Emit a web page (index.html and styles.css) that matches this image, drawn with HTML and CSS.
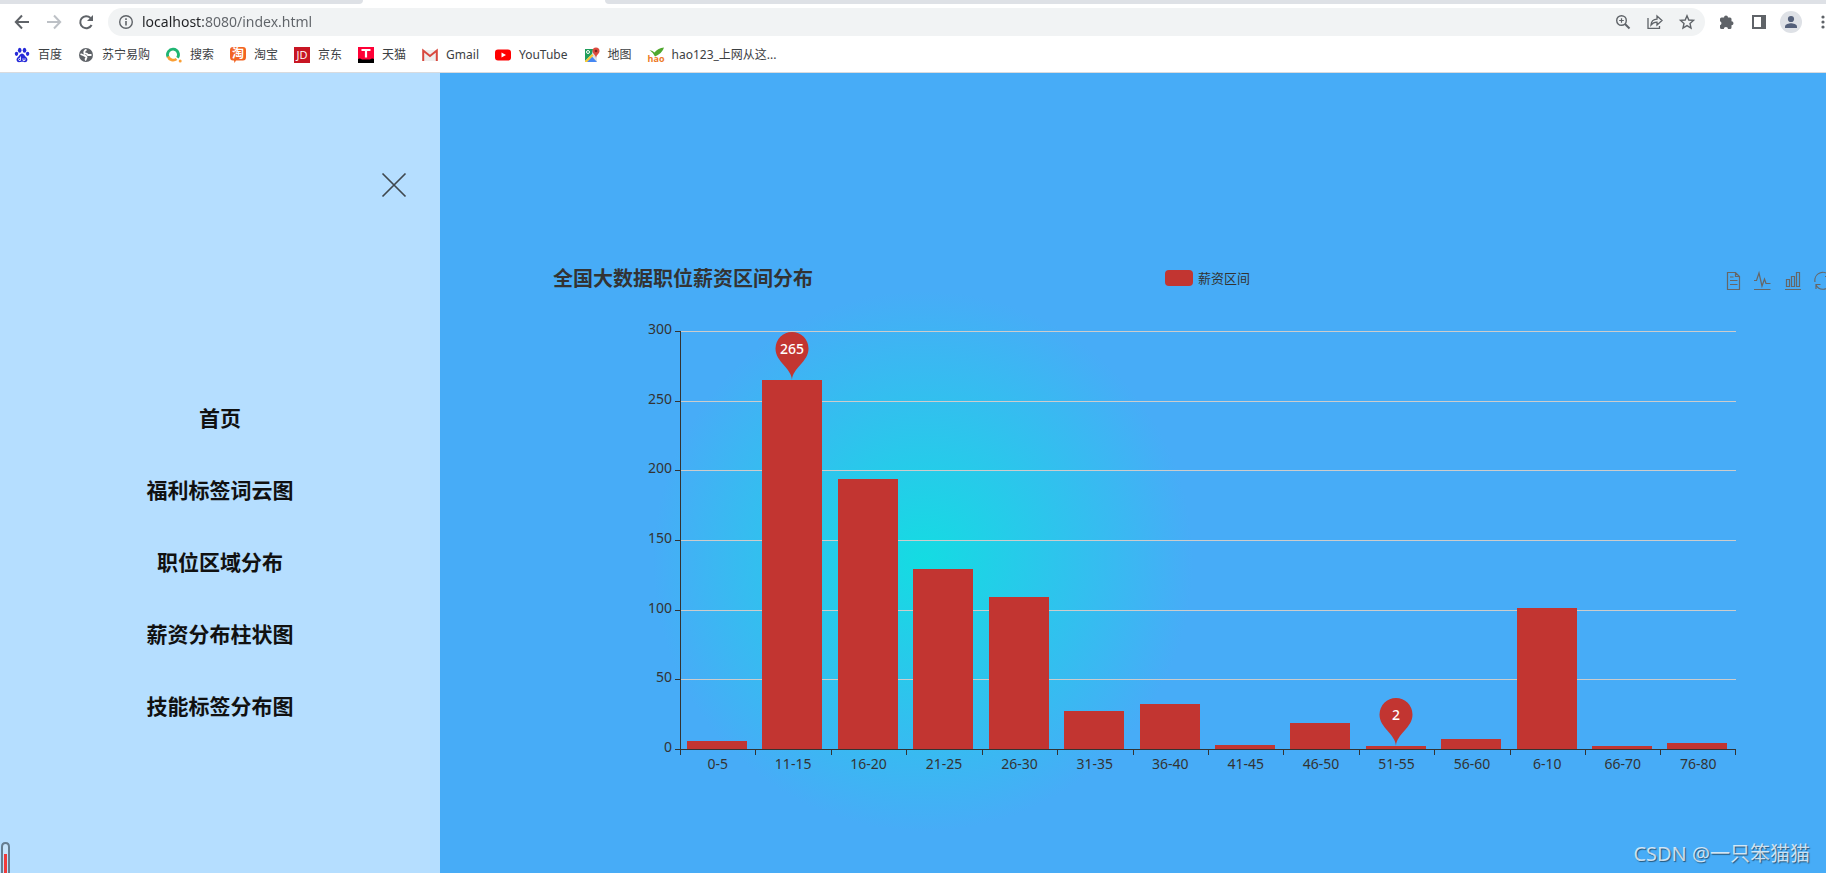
FILE: index.html
```html
<!DOCTYPE html>
<html lang="zh-CN">
<head>
<meta charset="utf-8">
<title>全国大数据职位薪资区间分布</title>
<link rel="stylesheet" href="styles.css">
</head>
<body>
<header class="browser">
  <div class="tabs"><span class="tab tab-before"></span><span class="tab-active"></span><span class="tab tab-after"></span></div>
  <div class="toolbar">
    <button class="nav-btn" aria-label="后退"><svg width="16" height="16" viewBox="0 0 16 16"><path d="M15 8H2M8 1.500L1.800 8L8 14.500" fill="none" stroke="#5f6368" stroke-width="2"/></svg></button>
    <button class="nav-btn" aria-label="前进"><svg width="16" height="16" viewBox="0 0 16 16"><path d="M1 8H14M8 1.500L14.200 8L8 14.500" fill="none" stroke="#bdc1c6" stroke-width="2"/></svg></button>
    <button class="nav-btn" aria-label="刷新"><svg width="16" height="16" viewBox="0 0 16 16"><path d="M13.600 11A6 6 0 1 1 12.500 4" fill="none" stroke="#5f6368" stroke-width="2"/><path d="M15 1V7H9Z" fill="#5f6368"/></svg></button>
    <div class="omnibox">
      <svg width="16" height="16" viewBox="0 0 16 16"><circle cx="8" cy="8" r="6.300" fill="none" stroke="#5f6368" stroke-width="1.400"/><path d="M8 7V11.500M8 4.300V5.900" stroke="#5f6368" stroke-width="1.600"/></svg>
      <input class="url" type="text" aria-label="地址" value="localhost:8080/index.html">
      <button class="nav-btn" aria-label="缩放"><svg width="16" height="16" viewBox="0 0 16 16" fill="none" stroke="#5f6368" stroke-width="1.400"><circle cx="6.500" cy="6.500" r="4.800"/><path d="M10 10L14.500 14.500" stroke-width="2"/><path d="M4.200 6.500H8.800M6.500 4.200V8.800" stroke-width="1.200"/></svg></button>
      <button class="nav-btn" aria-label="分享"><svg width="16" height="16" viewBox="0 0 16 16" fill="none" stroke="#5f6368" stroke-width="1.300"><path d="M1 4V14.300H12.500V12"/><path d="M4 11C4.300 7 6.500 5.300 10 5.200V2L15 6.600L10 11V8.100C7.500 8 5.700 8.800 4 11Z"/></svg></button>
      <button class="nav-btn" aria-label="收藏"><svg width="16" height="16" viewBox="0 0 16 16"><path d="M8 1.800L9.800 6L14.500 6.400L11 9.500L12 14L8 11.600L4 14L5 9.500L1.500 6.400L6.200 6Z" fill="none" stroke="#5f6368" stroke-width="1.400"/></svg></button>
    </div>
    <div class="actions">
      <button class="nav-btn" aria-label="扩展程序"><svg width="16" height="16" viewBox="0 0 16 16"><path d="M1 5Q1 3.500 2.500 3.500H5A2 2 0 0 1 9 3.500H11Q12.500 3.500 12.500 5V7.200A2 2 0 0 1 12.500 11.200V13.500Q12.500 15 11 15H9A2.100 2.100 0 0 0 4.800 15H2.500Q1 15 1 13.500V11.200A2.100 2.100 0 0 0 1 7.200Z" fill="#5f6368"/></svg></button>
      <button class="nav-btn" aria-label="侧边栏"><svg width="16" height="16" viewBox="0 0 16 16"><path d="M1 1H15V15H1ZM3 3V13H10V3Z" fill="#5f6368" fill-rule="evenodd"/></svg></button>
      <button class="nav-btn avatar" aria-label="用户"><svg width="22" height="22" viewBox="0 0 22 22"><circle cx="11" cy="11" r="11" fill="#dee1e6"/><circle cx="11" cy="8" r="3.100" fill="#54607a"/><path d="M5 17V15.500C5 13 9 12.200 11 12.200S17 13 17 15.500V17Z" fill="#54607a"/></svg></button>
      <button class="nav-btn" aria-label="菜单"><svg width="16" height="16" viewBox="0 0 16 16" fill="#5f6368"><circle cx="8" cy="3" r="1.600"/><circle cx="8" cy="8" r="1.600"/><circle cx="8" cy="13" r="1.600"/></svg></button>
    </div>
  </div>
  <nav class="bookmarks">
    <a href="#"><svg width="16" height="16" viewBox="0 0 16 16" fill="#2529d8"><ellipse cx="5.700" cy="3.200" rx="1.800" ry="2.500"/><ellipse cx="10.500" cy="3.200" rx="1.800" ry="2.500"/><ellipse cx="2.500" cy="6.800" rx="1.700" ry="2.100"/><ellipse cx="13.600" cy="6.800" rx="1.700" ry="2.100"/><path d="M8 6.500C10 6.500 10.500 8.800 12 10C14.500 12 13.500 15.200 11 15.200C9.500 15.200 9 14.800 8 14.800S6.500 15.200 5 15.200C2.500 15.200 1.500 12 4 10C5.500 8.800 6 6.500 8 6.500Z"/><path d="M6.500 9.500V13.500H5Q4 12.500 5 11.300H6.500M9 11.300V13.500H11V11.300" fill="none" stroke="#fff" stroke-width=".8"/></svg>百度</a>
    <a href="#"><svg width="16" height="16" viewBox="0 0 16 16"><circle cx="8" cy="8" r="7" fill="#5f6368"/><path d="M8.500 2.500Q5.500 4 6.500 6.500Q9 6.200 10 8H13.500M2.500 7L6 8.500Q8.500 9 8.500 10.500Q7 12 8 13.500" fill="none" stroke="#fff" stroke-width="1.800"/></svg>苏宁易购</a>
    <a href="#"><svg width="16" height="16" viewBox="0 0 16 16" fill="none" stroke-width="2.800"><path d="M2 10A5.500 5.500 0 1 1 11.500 10.800" stroke="#20b573"/><path d="M2 9.500A5.500 5.500 0 0 0 10.500 12" stroke="#fa9f35"/><circle cx="14.200" cy="14" r="1.500" fill="#fa9f35" stroke="none"/></svg>搜索</a>
    <a href="#"><svg width="16" height="16" viewBox="0 0 16 16"><path d="M3 0H13Q16 0 16 3V10Q16 13.500 13 13.500H6L4.500 16L4 13.500H3Q0 13.500 0 10V3Q0 0 3 0Z" fill="#f26422"/><text x="8" y="11" text-anchor="middle" class="glyph glyph-cjk">淘</text></svg>淘宝</a>
    <a href="#"><svg width="16" height="16" viewBox="0 0 16 16"><path d="M0 0H16V16H0Z" fill="#c81623"/><text x="8" y="12" text-anchor="middle" class="glyph">JD</text></svg>京东</a>
    <a href="#"><svg width="16" height="16" viewBox="0 0 16 16"><path d="M0 0H16V16H0Z" fill="#ff0036"/><path d="M0 16V12Q2 11 4 12.500H12Q14 11 16 12V16Z" fill="#000"/><path d="M3.500 3H12.500M8 3V10.500" stroke="#fff" stroke-width="2.200"/></svg>天猫</a>
    <a href="#"><svg width="16" height="16" viewBox="0 0 16 16"><path d="M1 3H15V14H1Z" fill="#eee"/><path d="M1.200 14V3.500L8 9L14.800 3.500V14" fill="none" stroke="#d8483e" stroke-width="2"/></svg>Gmail</a>
    <a href="#"><svg width="16" height="16" viewBox="0 0 16 16"><rect x="0" y="2.500" width="16" height="11" rx="3" fill="#f00"/><path d="M6.500 5.500L11 8L6.500 10.500Z" fill="#fff"/></svg>YouTube</a>
    <a href="#"><svg width="16" height="16" viewBox="0 0 16 16"><path d="M1 2H13V15H1Z" fill="#dfe3e6"/><path d="M1 2H9L8 7L1 14Z" fill="#1f9d5b"/><path d="M2.500 15L8 9.500L13 15Z" fill="#4587f3"/><path d="M1 14L8 7L9.500 8.500L3 15H1Z" fill="#fbc934"/><circle cx="4" cy="5" r="1.500" fill="none" stroke="#fff"/><path d="M12 0.500A3.500 3.500 0 0 1 15.500 4C15.500 6.500 12.500 7.500 12 11C11.500 7.500 8.500 6.500 8.500 4A3.500 3.500 0 0 1 12 0.500Z" fill="#dc4a3d"/><circle cx="12" cy="4" r="1.300" fill="#7c231c"/></svg>地图</a>
    <a href="#"><svg width="16" height="16" viewBox="0 0 16 16"><path d="M1.500 3Q5 3.500 6.500 5.500Q10 1 16 .5Q14.500 6 7 9.500Q5 5.500 1.500 3Z" fill="#4fa82f"/><text x="8" y="15" text-anchor="middle" class="glyph glyph-hao">hao</text></svg>hao123_上网从这...</a>
  </nav>
</header>
<div class="page">
  <aside class="sidebar">
    <button class="close" aria-label="关闭"><svg width="26" height="26" viewBox="0 0 26 26"><path d="M1.500 1.500L24.500 24.500M24.500 1.500L1.500 24.500" stroke="#222" stroke-opacity=".8" stroke-width="1.700"/></svg></button>
    <nav class="menu">
      <a href="#">首页</a>
      <a href="#">福利标签词云图</a>
      <a href="#">职位区域分布</a>
      <a href="#">薪资分布柱状图</a>
      <a href="#">技能标签分布图</a>
    </nav>
    <svg class="thermo" width="10" height="31" viewBox="0 0 10 31"><path d="M2 31V5Q2 1 5.500 1T9 5V31" fill="#c5e4fc" stroke="#657d90" stroke-width="2"/><path d="M5.500 31V12" stroke="#f03b3b" stroke-width="3"/></svg>
  </aside>
  <main class="content">
    <section class="chart">
      <div class="chart-head">
        <h1>全国大数据职位薪资区间分布</h1>
        <div class="legend"><span class="swatch"></span>薪资区间</div>
        <div class="toolbox">
          <button aria-label="数据视图"><svg width="18" height="20" viewBox="0 0 18 20"><path d="M3.500 1.500H11.500L15.500 5.500V18.500H3.500ZM11.500 1.500V5.500H15.500M6 6H9.500M6 9.500H13.500M6 13.500H13.500"/></svg></button>
          <button aria-label="切换为折线图"><svg width="18" height="20" viewBox="0 0 18 20"><path d="M0 9.500H2.500L5 2L8 15L10.500 8L12 12.500H16.500M0 18.500H16.500"/></svg></button>
          <button aria-label="切换为柱状图"><svg width="18" height="20" viewBox="0 0 18 20"><path d="M2.500 8.500H5.500V15.500H2.500ZM7.500 5.500H10.500V15.500H7.500ZM12.500 1.500H15.500V15.500H12.500ZM1 18.500H17"/></svg></button>
          <button aria-label="还原"><svg width="18" height="20" viewBox="0 0 18 20"><path d="M1 11A8 8 0 0 1 15.500 5M17 11A8 8 0 0 1 2 14M15.500 1V5.500H11M2 18V13.500H6.500"/></svg></button>
        </div>
      </div>
      <div class="plot-row">
        <div class="y-axis"><span>300</span><span>250</span><span>200</span><span>150</span><span>100</span><span>50</span><span>0</span></div>
        <div class="plot">
          <div class="grid-lines"><i></i><i></i><i></i><i></i><i></i><i></i></div>
          <div class="bars">
            <div class="slot"><div class="bar" style="height:2%"></div></div>
            <div class="slot"><div class="bar" style="height:88.33%"><svg class="pin" width="34" height="48" viewBox="0 0 34 48"><path d="M17 48C16.500 36 0.500 30 0.500 16.500A16.500 16.500 0 0 1 33.500 16.500C33.500 30 17.500 36 17 48Z"/><text x="17" y="22" text-anchor="middle">265</text></svg></div></div>
            <div class="slot"><div class="bar" style="height:64.67%"></div></div>
            <div class="slot"><div class="bar" style="height:43%"></div></div>
            <div class="slot"><div class="bar" style="height:36.33%"></div></div>
            <div class="slot"><div class="bar" style="height:9%"></div></div>
            <div class="slot"><div class="bar" style="height:10.67%"></div></div>
            <div class="slot"><div class="bar" style="height:1%"></div></div>
            <div class="slot"><div class="bar" style="height:6.33%"></div></div>
            <div class="slot"><div class="bar" style="height:.67%"><svg class="pin" width="34" height="48" viewBox="0 0 34 48"><path d="M17 48C16.500 36 0.500 30 0.500 16.500A16.500 16.500 0 0 1 33.500 16.500C33.500 30 17.500 36 17 48Z"/><text x="17" y="22" text-anchor="middle">2</text></svg></div></div>
            <div class="slot"><div class="bar" style="height:2.33%"></div></div>
            <div class="slot"><div class="bar" style="height:33.67%"></div></div>
            <div class="slot"><div class="bar" style="height:.67%"></div></div>
            <div class="slot"><div class="bar" style="height:1.33%"></div></div>
          </div>
        </div>
      </div>
      <div class="x-axis"><span>0-5</span><span>11-15</span><span>16-20</span><span>21-25</span><span>26-30</span><span>31-35</span><span>36-40</span><span>41-45</span><span>46-50</span><span>51-55</span><span>56-60</span><span>6-10</span><span>66-70</span><span>76-80</span></div>
    </section>
    <div class="watermark">CSDN @一只笨猫猫</div>
  </main>
</div>
</body>
</html>
```
FILE: styles.css
```css
* { box-sizing: border-box; }
body {
  margin: 0;
  min-height: 100vh;
  display: flex;
  flex-direction: column;
  overflow: hidden;
  font-family: "Noto Sans", "Noto Sans CJK SC", sans-serif;
}
button { padding: 0; border: 0; background: none; display: grid; place-items: center; }
svg { display: block; flex: none; overflow: visible; }
a { color: inherit; text-decoration: none; }

.browser { background: #fff; border-bottom: 1px solid #d9dbde; overflow: hidden; }
.tabs { display: flex; height: 4px; }
.tab { background: #dee1e6; }
.tab-before { width: 363px; border-bottom-right-radius: 8px; }
.tab-active { width: 242px; }
.tab-after { flex: 1; border-bottom-left-radius: 8px; }
.toolbar { display: flex; align-items: center; gap: 16px; height: 36px; padding-left: 14px; }
.nav-btn { width: 16px; height: 22px; }
.omnibox {
  flex: 1;
  display: flex;
  align-items: center;
  gap: 16px;
  height: 28px;
  margin-left: -2px;
  padding: 0 10px;
  border-radius: 14px;
  background: #f1f3f4;
}
.url {
  flex: 1;
  min-width: 0;
  margin-left: -8px;
  padding: 0;
  border: 0;
  font: 14px/20px "Noto Sans", sans-serif;
  color: transparent;
  background: linear-gradient(90deg, #202124 61px, #5f6368 61px);
  -webkit-background-clip: text;
  background-clip: text;
}
.actions { display: flex; gap: 16px; margin: 0 -5px 0 -2px; }
.avatar { width: 22px; margin: 0 -3px; }
.bookmarks {
  display: flex;
  align-items: center;
  gap: 16px;
  height: 32px;
  padding: 0 14px 4px;
  font-size: 12px;
  line-height: 20px;
  color: #3c4043;
  white-space: nowrap;
}
.bookmarks a { display: flex; align-items: center; gap: 8px; padding-top: 1px; }
.glyph { font: 11px "Open Sans", sans-serif; fill: #fff; }
.glyph-cjk { font: bold 12px "Noto Sans CJK SC", sans-serif; }
.glyph-hao { font: bold 9px "Open Sans", sans-serif; fill: #ed7a26; }

.page {
  flex: 1;
  display: flex;
  background: radial-gradient(circle 270px at 923px 488px, #14dce2, #47acf7);
}
.sidebar { position: relative; width: 440px; background: #b5deff; }
.close { margin: 99px 33px 0 auto; }
.menu {
  display: flex;
  flex-direction: column;
  align-items: center;
  gap: 40px;
  margin-top: 204px;
  font-size: 21px;
  line-height: 32px;
  font-weight: bold;
  color: #111;
}
.thermo { position: absolute; left: 0; bottom: 0; }

.content { position: relative; flex: 1; min-width: 0; overflow: hidden; }
.chart { margin: 188px -36px 0 113px; color: #333; }
.chart-head { display: grid; grid-template-columns: 1fr auto 1fr; align-items: center; height: 36px; }
h1 { margin: 0; font-size: 20px; line-height: 28px; }
.legend { display: flex; align-items: center; gap: 5px; padding-bottom: 3px; font-size: 13px; line-height: 20px; }
.swatch { width: 28px; height: 16px; border-radius: 4px; background: #c23531; }
.toolbox { display: flex; justify-content: flex-end; gap: 12px; padding: 4px 30px 0 0; }
.toolbox svg { fill: none; stroke: #666; stroke-width: 1.2; }

.plot-row { position: relative; display: flex; margin: 34px 126px 0 127px; height: 418px; }
.y-axis {
  position: absolute;
  right: 100%;
  top: -12px;
  bottom: -8px;
  display: flex;
  flex-direction: column;
  justify-content: space-between;
  padding-right: 8px;
  text-align: right;
  font-size: 14px;
  line-height: 20px;
}
.plot { position: relative; flex: 1; }
.plot::before { content: ""; position: absolute; left: 0; top: 0; bottom: 0; width: 1px; background: #333; }
.grid-lines { position: absolute; inset: 0 0 0 1px; display: flex; flex-direction: column; }
.grid-lines i { position: relative; flex: 1; border-top: 1px solid #ccc; }
.grid-lines i::before { content: ""; position: absolute; right: 100%; top: -1px; width: 6px; height: 1px; background: #333; }
.bars { position: relative; display: flex; height: 100%; }
.slot { flex: 1; display: flex; align-items: flex-end; padding-left: 7px; }
.bar { position: relative; width: 60px; max-width: 88%; background: #c23531; }
.pin { position: absolute; left: 50%; bottom: 100%; margin-left: -17px; fill: #c23531; }
.pin text { fill: #fff; font: 500 14px "Noto Sans", sans-serif; }
.x-axis {
  position: relative;
  display: flex;
  margin: 0 126px 0 127px;
  border-top: 1px solid #333;
  font-size: 14px;
  line-height: 20px;
}
.x-axis::before { content: ""; position: absolute; right: 100%; top: -1px; width: 5px; height: 1px; background: #333; }
.x-axis span { flex: 1; padding-top: 4px; text-align: center; background: linear-gradient(#333, #333) left top / 1px 5px no-repeat; }
.x-axis span:last-child {
  background:
    linear-gradient(#333, #333) left top / 1px 5px no-repeat,
    linear-gradient(#333, #333) right top / 1px 5px no-repeat;
}
.watermark {
  position: absolute;
  right: 16px;
  bottom: 5px;
  font-size: 20px;
  line-height: 28px;
  color: rgba(255, 255, 255, .75);
  text-shadow: 1px 1px 1px rgba(0, 0, 0, .5);
}
```
